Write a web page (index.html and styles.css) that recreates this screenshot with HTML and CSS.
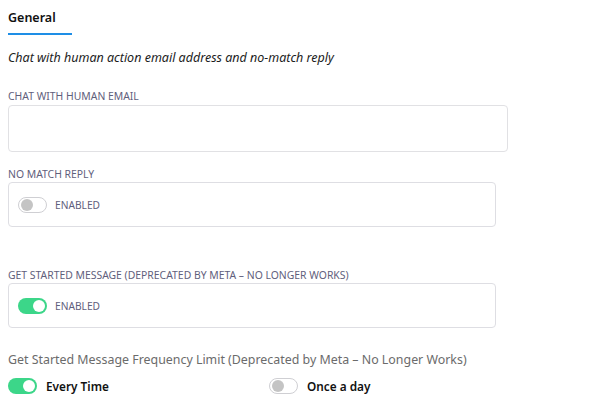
FILE: index.html
```html
<!DOCTYPE html>
<html>
<head>
<meta charset="utf-8">
<link rel="stylesheet" href="styles.css">
</head>
<body>
<div class="page">
  <div class="tabs"><div class="tab active">General</div></div>
  <p class="desc">Chat with human action email address and no-match reply</p>

  <div class="field email-field">
    <div class="label">CHAT WITH HUMAN EMAIL</div>
    <div class="input"></div>
  </div>

  <div class="field nomatch-field">
    <div class="label">NO MATCH REPLY</div>
    <div class="box">
      <span class="toggle off"><span class="knob"></span></span>
      <span class="toggle-text">ENABLED</span>
    </div>
  </div>

  <div class="field started-field">
    <div class="label">GET STARTED MESSAGE (DEPRECATED BY META – NO LONGER WORKS)</div>
    <div class="box">
      <span class="toggle on"><span class="knob"></span></span>
      <span class="toggle-text">ENABLED</span>
    </div>
  </div>

  <div class="freq">
    <div class="freq-label">Get Started Message Frequency Limit (Deprecated by Meta – No Longer Works)</div>
    <div class="freq-row">
      <div class="opt">
        <span class="toggle on"><span class="knob"></span></span>
        <span class="opt-text">Every Time</span>
      </div>
      <div class="opt">
        <span class="toggle off"><span class="knob"></span></span>
        <span class="opt-text">Once a day</span>
      </div>
    </div>
  </div>
</div>
</body>
</html>
```
FILE: styles.css
```css
html, body {
  margin: 0;
  padding: 0;
  background: #ffffff;
}
body {
  font-family: "Noto Sans", "Open Sans", sans-serif;
  color: #1f1f1f;
}
.page {
  padding: 0 8px;
}
.tabs {
  display: flex;
  padding-top: 9px;
}
.tab {
  width: 64px;
  font-size: 12.5px;
  font-weight: 600;
  line-height: 18px;
  padding-bottom: 6px;
  border-bottom: 2px solid #1e8ee6;
  color: #111;
}
.desc {
  margin: 14px 0 0;
  font-size: 12.5px;
  font-style: italic;
  line-height: 18px;
  color: #1c1c1c;
}
.field {
  display: flex;
  flex-direction: column;
}
.label {
  font-size: 10.4px;
  line-height: 14px;
  color: #5f607c;
  margin-bottom: 1px;
}
.email-field { margin-top: 22px; }
.input {
  width: 498px;
  height: 45px;
  margin-top: 1px;
  border: 1px solid #e1e1e4;
  border-radius: 4px;
}
.nomatch-field { margin-top: 15px; }
.started-field { margin-top: 41px; }
.box {
  height: 43px;
  border: 1px solid #dedee3;
  border-radius: 4px;
  display: flex;
  align-items: center;
  padding-left: 9px;
  box-sizing: content-box;
  width: 477px;
}
.toggle {
  position: relative;
  display: inline-block;
  width: 29px;
  height: 16px;
  border-radius: 8px;
  box-sizing: border-box;
  flex: none;
}
.toggle.off {
  border: 1px solid #cfcfd3;
  background: #fff;
}
.toggle.on {
  background: #3cd689;
}
.knob {
  position: absolute;
  top: 2px;
  width: 12px;
  height: 12px;
  border-radius: 50%;
}
.toggle.off .knob {
  left: 2px;
  top: 1px;
  background: #c4c4c4;
}
.toggle.on .knob {
  right: 2px;
  background: #fff;
}
.toggle-text {
  margin-left: 8px;
  font-size: 10.2px;
  color: #5f607c;
}
.freq {
  margin-top: 23px;
}
.freq-label {
  font-size: 12.4px;
  line-height: 18px;
  color: #6b6b6b;
}
.freq-row {
  display: flex;
  margin-top: 8px;
  height: 18px;
}
.opt {
  display: flex;
  align-items: center;
  width: 261px;
}
.opt-text {
  margin-left: 9px;
  font-size: 11.8px;
  font-weight: 600;
  color: #111;
}
```
